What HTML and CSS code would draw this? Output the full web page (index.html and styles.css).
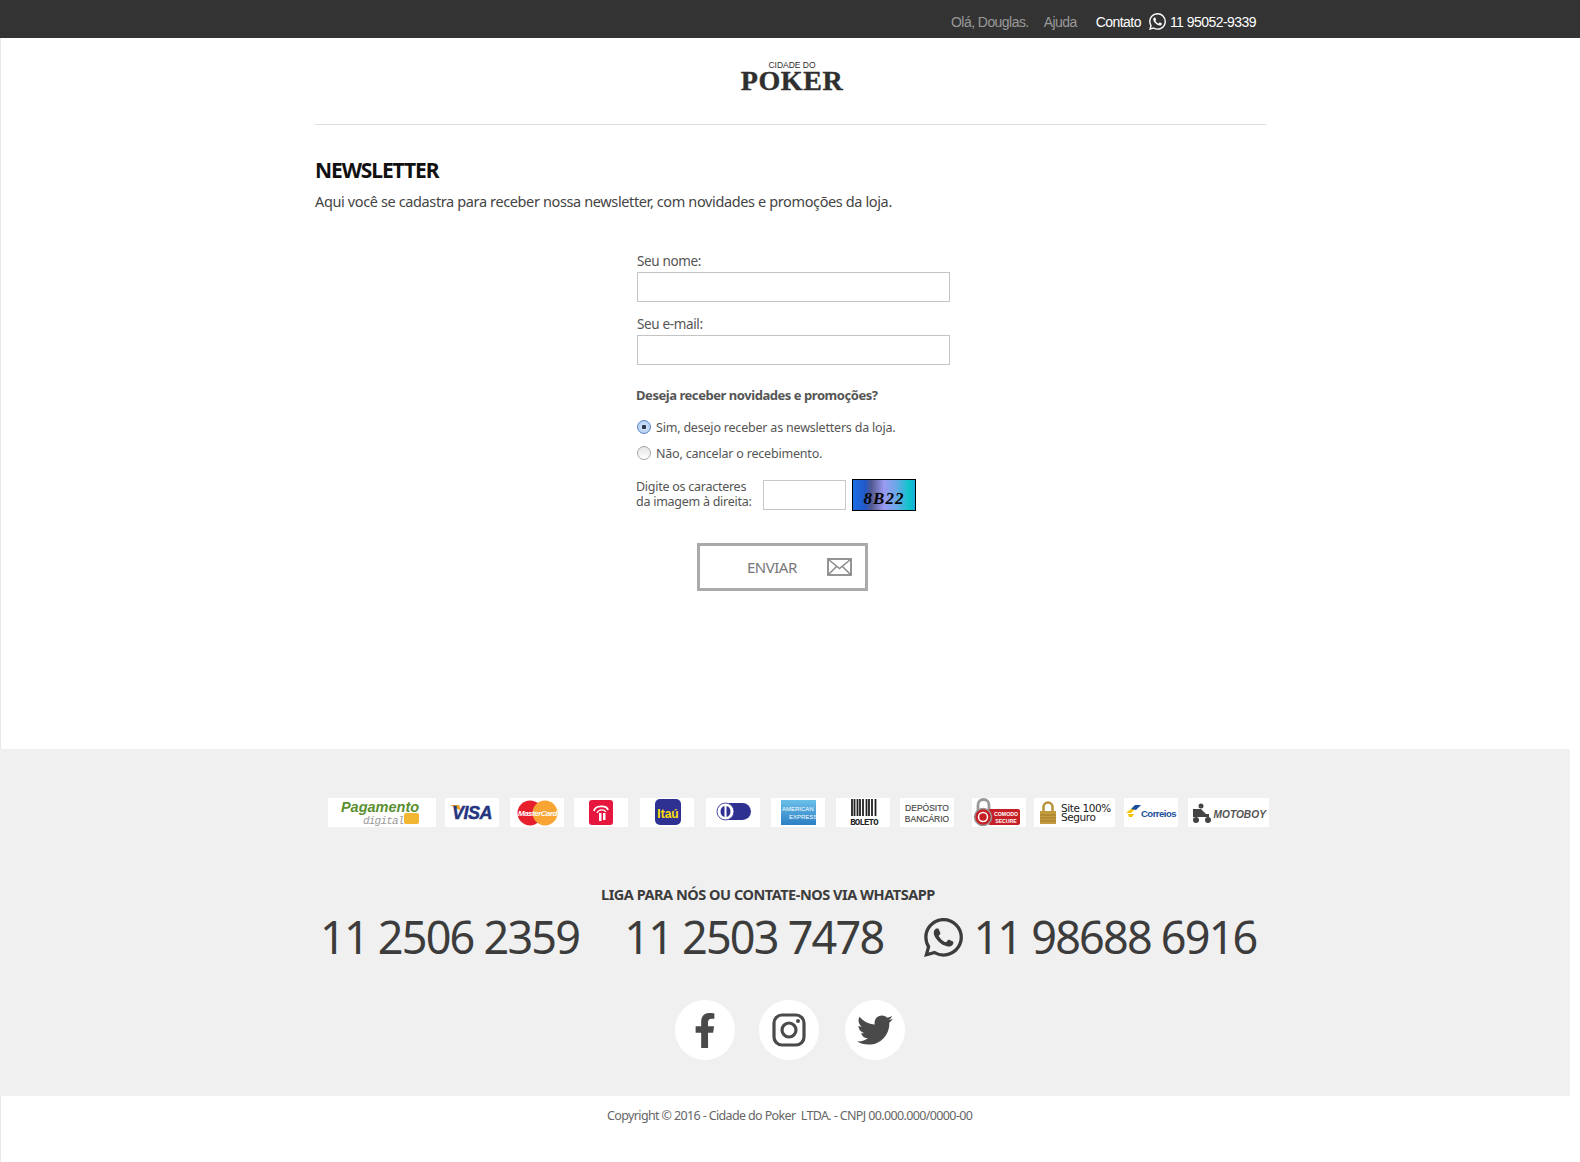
FILE: index.html
```html
<!DOCTYPE html>
<html lang="pt-BR">
<head>
<meta charset="utf-8">
<title>Newsletter - Cidade do Poker</title>
<link rel="stylesheet" href="styles.css">
</head>
<body>
<header class="topbar">
  <div class="topbar-inner">
    <a class="top-link">Olá, Douglas.</a>
    <a class="top-link help">Ajuda</a>
    <span class="top-contact">Contato</span>
    <svg class="top-wa" viewBox="0 0 24 24"><use href="#wa"/></svg>
    <span class="top-phone">11 95052-9339</span>
  </div>
</header>

<svg class="defs" width="0" height="0">
  <defs>
    <path id="wa" d="M17.472 14.382c-.297-.149-1.758-.867-2.03-.967-.273-.099-.471-.148-.67.15-.197.297-.767.966-.94 1.164-.173.199-.347.223-.644.075-.297-.15-1.255-.463-2.39-1.475-.883-.788-1.48-1.761-1.653-2.059-.173-.297-.018-.458.13-.606.134-.133.298-.347.446-.52.149-.174.198-.298.298-.497.099-.198.05-.371-.025-.52-.075-.149-.669-1.612-.916-2.207-.242-.579-.487-.5-.669-.51-.173-.008-.371-.01-.57-.01-.198 0-.52.074-.792.372-.272.297-1.04 1.016-1.04 2.479 0 1.462 1.065 2.875 1.213 3.074.149.198 2.096 3.2 5.077 4.487.709.306 1.262.489 1.694.625.712.227 1.36.195 1.871.118.571-.085 1.758-.719 2.006-1.413.248-.694.248-1.289.173-1.413-.074-.124-.272-.198-.57-.347m-5.421 7.403h-.004a9.87 9.87 0 01-5.031-1.378l-.361-.214-3.741.982.998-3.648-.235-.374a9.86 9.86 0 01-1.51-5.26c.001-5.45 4.436-9.884 9.888-9.884 2.64 0 5.122 1.03 6.988 2.898a9.825 9.825 0 012.893 6.994c-.003 5.45-4.437 9.884-9.885 9.884m8.413-18.297A11.815 11.815 0 0012.05 0C5.495 0 .16 5.335.157 11.892c0 2.096.547 4.142 1.588 5.945L.057 24l6.305-1.654a11.882 11.882 0 005.683 1.448h.005c6.554 0 11.89-5.335 11.893-11.893a11.821 11.821 0 00-3.48-8.413z"/>
  </defs>
</svg>

<div class="page">
  <main class="main">
    <div class="logo-row">
      <div class="logo">
        <span class="logo-small">CIDADE DO</span>
        <span class="logo-big">POKER</span>
      </div>
    </div>
    <h1 class="title">NEWSLETTER</h1>
    <p class="intro">Aqui você se cadastra para receber nossa newsletter, com novidades e promoções da loja.</p>

    <form class="form">
      <label class="field-label">Seu nome:</label>
      <input class="field" type="text">
      <label class="field-label second">Seu e-mail:</label>
      <input class="field" type="text">

      <p class="question">Deseja receber novidades e promoções?</p>
      <div class="radio-row first">
        <span class="radio checked"></span>
        <span class="radio-text">Sim, desejo receber as newsletters da loja.</span>
      </div>
      <div class="radio-row">
        <span class="radio"></span>
        <span class="radio-text">Não, cancelar o recebimento.</span>
      </div>

      <div class="captcha-row">
        <span class="captcha-label">Digite os caracteres<br>da imagem à direita:</span>
        <input class="captcha-input" type="text">
        <span class="captcha-img">8B22</span>
      </div>

      <div class="btn-row">
        <button class="send" type="button">
          <span>ENVIAR</span>
          <svg class="send-icon" viewBox="0 0 25 18"><rect x="1" y="1" width="23" height="16" fill="none" stroke="#8a8a8a" stroke-width="1.8"/><path d="M1.5 1.5L12.5 10.5L23.5 1.5M1.5 16.5L9.5 8.5M23.5 16.5L15.5 8.5" fill="none" stroke="#8a8a8a" stroke-width="1.5"/></svg>
        </button>
      </div>
    </form>
  </main>

  <footer class="footer">
    <div class="tiles">
      <div class="tile w108">
        <svg viewBox="0 0 108 29"><text x="52" y="14" class="pd1">Pagamento</text><text x="35" y="26" class="pd2">digital</text><rect x="76" y="15" width="15" height="11" rx="2" fill="#f2b632"/></svg>
      </div>
      <div class="tile ml9">
        <svg viewBox="0 0 54 29"><path d="M5 7h9l2.500 6z" fill="#f0a02c"/><text x="27" y="21" class="visa">VISA</text></svg>
      </div>
      <div class="tile ml11">
        <svg viewBox="0 0 54 29"><circle cx="20" cy="15" r="12.500" fill="#e8202e"/><circle cx="35" cy="15" r="12.500" fill="#f9a533"/><text x="27.500" y="18" class="mc">MasterCard</text></svg>
      </div>
      <div class="tile ml10">
        <svg viewBox="0 0 54 29"><rect x="15" y="2" width="24" height="25" rx="3" fill="#e5173f"/><path d="M20 13c1-6 13-6 14-1" fill="none" stroke="#fff" stroke-width="1.800"/><path d="M23 15c2-4 7-4 9-1" fill="none" stroke="#fff" stroke-width="1.200"/><path d="M25 15h2.500v8H25zM29 15h2.500v7H29z" fill="#fff"/></svg>
      </div>
      <div class="tile ml12">
        <svg viewBox="0 0 54 29"><rect x="15" y="1" width="26" height="26" rx="5" fill="#2e3192"/><text x="28" y="20" class="itau">Itaú</text></svg>
      </div>
      <div class="tile ml12">
        <svg viewBox="0 0 54 29"><rect x="11" y="5" width="34" height="17" rx="8.500" fill="#2e3192"/><circle cx="19.500" cy="13.500" r="8.500" fill="#fff" stroke="#2e3192" stroke-width=".8"/><path d="M18.500 8v11a5.800 5.800 0 0 1 0-11zM20.500 8a5.800 5.800 0 0 1 0 11z" fill="#2e3192"/></svg>
      </div>
      <div class="tile ml11">
        <svg viewBox="0 0 54 29"><defs><linearGradient id="amex" x1="0" y1="0" x2="0" y2="1"><stop offset="0" stop-color="#6bc0ea"/><stop offset="1" stop-color="#2b7fc3"/></linearGradient></defs><rect x="10" y="2" width="35" height="25" fill="url(#amex)"/><text x="11" y="13" class="amex">AMERICAN</text><text x="18" y="21" class="amex">EXPRESS</text></svg>
      </div>
      <div class="tile ml11">
        <svg viewBox="0 0 54 29"><path d="M16 1v17M18.500 1v17M21.500 1v17M24 1v17M27 1v17M30.500 1v17M33 1v17M36 1v17M39.500 1v17" stroke="#222" stroke-width="1.800"/><text x="28" y="27" class="boleto">BOLETO</text></svg>
      </div>
      <div class="tile ml10">
        <svg viewBox="0 0 54 29"><text x="27" y="13" class="dep">DEPÓSITO</text><text x="27" y="24" class="dep">BANCÁRIO</text></svg>
      </div>
      <div class="tile ml18">
        <svg viewBox="0 0 54 29"><path d="M6 14V7a5.500 5.500 0 0 1 11 0v7" fill="none" stroke="#999" stroke-width="2.800"/><rect x="16" y="11" width="32" height="16" rx="2" fill="#c61f26"/><circle cx="11" cy="19" r="8.500" fill="#c61f26" stroke="#999" stroke-width="1.500"/><circle cx="11" cy="19" r="4.500" fill="none" stroke="#fff" stroke-width="1.500"/><text x="34" y="18" class="com">COMODO</text><text x="34" y="25" class="com">SECURE</text></svg>
      </div>
      <div class="tile w81 ml8">
        <svg viewBox="0 0 81 29"><path d="M9.500 14V9a4.500 4.500 0 0 1 9 0v5" fill="none" stroke="#b8923c" stroke-width="2.500"/><rect x="6" y="13" width="16" height="13" fill="#c49a3f"/><path d="M6 17h16M6 20h16M6 23h16" stroke="#a27a2b" stroke-width="1"/><text x="27" y="14" class="site">Site 100%</text><text x="27" y="23" class="site">Seguro</text></svg>
      </div>
      <div class="tile ml9">
        <svg viewBox="0 0 54 29"><path d="M2 15l5-4h4l-4 4z" fill="#f4c300"/><path d="M7 11l4-4h6l-5 5z" fill="#1a4f9c"/><path d="M4 16h6l-2 3H5z" fill="#f4c300"/><text x="17" y="19" class="cor">Correios</text></svg>
      </div>
      <div class="tile w81 ml10">
        <svg viewBox="0 0 81 29"><circle cx="13" cy="8" r="2.500" fill="#444"/><path d="M5 11h8v8H5zM13 11l5 5h3v3h-8z" fill="#444"/><circle cx="8" cy="22" r="3" fill="#444"/><circle cx="20" cy="22" r="3" fill="#444"/><text x="25.500" y="20" class="moto">MOTOBOY</text></svg>
      </div>
    </div>

    <h2 class="liga">LIGA PARA NÓS OU CONTATE-NOS VIA WHATSAPP</h2>
    <div class="phones">
      <span class="phone">11 2506 2359</span>
      <span class="phone p2">11 2503 7478</span>
      <svg class="phone-wa" viewBox="0 0 24 24"><use href="#wa"/></svg>
      <span class="phone p3">11 98688 6916</span>
    </div>

    <div class="social">
      <a class="soc"><svg class="i-fb" viewBox="0 0 320 512"><path d="M279.14 288l14.22-92.66h-88.91v-60.13c0-25.35 12.42-50.06 52.24-50.06h40.42V6.26S260.43 0 225.36 0c-73.22 0-121.08 44.38-121.08 124.72v70.62H22.89V288h81.39v224h100.17V288z"/></svg></a>
      <a class="soc"><svg class="i-ig" viewBox="0 0 34 34"><rect x="2" y="2" width="30" height="30" rx="8" fill="none" stroke-width="3.200"/><circle cx="17" cy="17" r="7" fill="none" stroke-width="3.200"/><circle cx="26" cy="8" r="2" class="dot"/></svg></a>
      <a class="soc"><svg class="i-tw" viewBox="0 0 512 512"><path d="M459.37 151.716c.325 4.548.325 9.097.325 13.645 0 138.72-105.583 298.558-298.558 298.558-59.452 0-114.68-17.219-161.137-47.106 8.447.974 16.568 1.299 25.34 1.299 49.055 0 94.213-16.568 130.274-44.832-46.132-.975-84.792-31.188-98.112-72.772 6.498.974 12.995 1.624 19.818 1.624 9.421 0 18.843-1.3 27.614-3.573-48.081-9.747-84.143-51.98-84.143-102.985v-1.299c13.969 7.797 30.214 12.67 47.431 13.319-28.264-18.843-46.781-51.005-46.781-87.391 0-19.492 5.197-37.36 14.294-52.954 51.655 63.675 129.3 105.258 216.365 109.807-1.624-7.797-2.599-15.918-2.599-24.04 0-57.828 46.782-104.934 104.934-104.934 30.213 0 57.502 12.67 76.67 33.137 23.715-4.548 46.456-13.32 66.599-25.34-7.798 24.366-24.366 44.833-46.132 57.827 21.117-2.273 41.584-8.122 60.426-16.243-14.292 20.791-32.161 39.308-52.628 54.253z"/></svg></a>
    </div>
  </footer>
  <p class="copy">Copyright © 2016 - Cidade do Poker  LTDA. - CNPJ 00.000.000/0000-00</p>
</div>
</body>
</html>
```

FILE: styles.css
```css
* { box-sizing: border-box; }
html, body { margin: 0; padding: 0; background: #fff; }
body { font-family: "Noto Sans", "Open Sans", sans-serif; color: #3c3c3c; height: 1162px; overflow: hidden; }
.defs { display: block; height: 0; }

.topbar { height: 38px; background: #333; }
.topbar-inner { display: flex; align-items: center; height: 38px; padding: 5px 0 0 951px; font-family: "Liberation Sans", Arial, sans-serif; font-size: 14px; letter-spacing: -.55px; }
.top-link { color: #999; }
.help { margin-left: 15px; }
.top-contact { color: #fff; margin-left: 19px; }
.top-wa { width: 17px; height: 17px; fill: #fff; margin: -1px 0 0 8px; }
.top-phone { color: #fff; margin-left: 4px; }

.page { border-left: 1px solid #e8e8e8; height: 1124px; }
.main { height: 711px; margin-left: 314px; width: 951px; }
.logo-row { height: 87px; border-bottom: 1px solid #ddd; display: flex; justify-content: center; }
.logo { display: flex; flex-direction: column; align-items: center; padding-top: 23px; color: #2f2f2f; margin-left: 3px; }
.logo-small { font-family: "Liberation Sans", sans-serif; font-size: 8.500px; line-height: 9px; }
.logo-big { font-family: "Liberation Serif", serif; font-weight: bold; font-size: 28px; line-height: 22px; letter-spacing: .6px; -webkit-text-stroke: .4px #2f2f2f; }

.title { margin: 32px 0 0; font-size: 21px; line-height: 26px; font-weight: 700; color: #111; letter-spacing: -1.1px; }
.intro { margin: 8px 0 0; font-size: 14.500px; line-height: 20px; color: #444; letter-spacing: -.375px; }

.form { margin: 41px 0 0 322px; width: 330px; }
.field-label { display: block; font-size: 13.500px; line-height: 18px; color: #555; letter-spacing: -.35px; }
.field-label.second { margin-top: 13px; }
.field { display: block; width: 313px; height: 30px; border: 1px solid #c4c4c4; background: #fff; margin-top: 2px; padding: 0; }
.question { margin: 21px 0 0 -1px; font-size: 13px; line-height: 18px; font-weight: 700; color: #555; letter-spacing: -.45px; }
.radio-row { display: flex; align-items: center; height: 18px; margin-top: 8px; }
.radio-row.first { margin-top: 14px; }
.radio { width: 14px; height: 14px; border-radius: 50%; border: 1px solid #a5a5a5; background: linear-gradient(#e4e4e4, #fff); position: relative; }
.radio.checked { border-color: #5a86c5; background: radial-gradient(circle, #27354d 0 2px, #cfe0f7 2.500px, #9fc0ec 100%); }
.radio-text { margin-left: 5px; font-size: 12.500px; color: #555; letter-spacing: -.2px; }
.captcha-row { display: flex; align-items: center; margin: 17px 0 0 -1px; height: 32px; }
.captcha-label { width: 127px; margin-top: -2px; font-size: 12.500px; line-height: 15px; color: #555; letter-spacing: -.26px; }
.captcha-input { width: 83px; height: 30px; border: 1px solid #c8c8c8; padding: 0; background: #fff; }
.captcha-img { width: 64px; height: 32px; margin-left: 6px; border: 1px solid #000; background: linear-gradient(90deg, #1a6ee6 0%, #2358c8 20%, #555a90 30%, #9a9af2 50%, #6aa8e8 70%, #10c4cc 90%, #15b0d8 100%); font-family: "Liberation Serif", serif; font-weight: bold; font-style: italic; font-size: 17px; color: #050505; line-height: 38px; text-align: center; letter-spacing: 1px; }
.btn-row { margin: 32px 0 0 60px; }
.send { display: flex; align-items: center; width: 171px; height: 48px; border: 3px solid #aaa; background: #fff; padding: 0 0 0 47px; font-family: inherit; font-size: 15px; color: #777; letter-spacing: -.5px; }
.send-icon { width: 25px; height: 18px; margin-left: 30px; }

.footer { margin-left: -1px; width: 1570px; height: 347px; background: #f0f0f0; padding-top: 49px; }
.tiles { display: flex; padding-left: 328px; }
.tile { width: 54px; height: 29px; background: #fff; flex: none; }
.tile svg { display: block; width: 100%; height: 100%; }
.tile.w108 { width: 108px; }
.tile.w81 { width: 81px; }
.ml8 { margin-left: 8px; }
.ml9 { margin-left: 9px; }
.ml10 { margin-left: 10px; }
.ml11 { margin-left: 11px; }
.ml12 { margin-left: 12px; }
.ml18 { margin-left: 18px; }

.pd1 { font: italic bold 14.500px "Liberation Sans", sans-serif; fill: #5a9030; text-anchor: middle; }
.pd2 { font: italic 11px "Liberation Mono", monospace; fill: #9a9a9a; letter-spacing: -.8px; }
.visa { font: italic bold 18px "Liberation Sans", sans-serif; fill: #24357f; stroke: #24357f; stroke-width: .4px; text-anchor: middle; letter-spacing: -.5px; }
.mc { font: italic bold 8px "Liberation Sans", sans-serif; fill: #fff; text-anchor: middle; letter-spacing: -.5px; }
.itau { font: bold 12px "Liberation Sans", sans-serif; fill: #ffe100; text-anchor: middle; }
.amex { font: 6px "Liberation Sans", sans-serif; fill: #fff; }
.boleto { font: bold 9px "Liberation Mono", monospace; fill: #222; text-anchor: middle; letter-spacing: -.8px; }
.dep { font: 8.500px "Liberation Sans", sans-serif; fill: #444; stroke: #444; stroke-width: .15px; text-anchor: middle; }
.com { font: bold 5.200px "Liberation Sans", sans-serif; fill: #fff; text-anchor: middle; }
.site { font: 10.500px "DejaVu Sans", sans-serif; fill: #222; letter-spacing: -.4px; }
.cor { font: bold 9.500px "Liberation Sans", sans-serif; fill: #1a4f9c; letter-spacing: -.5px; }
.moto { font: italic bold 10.200px "Liberation Sans", sans-serif; fill: #555; }

.liga { margin: 57px 0 0; padding-left: 601px; font-size: 14.500px; line-height: 20px; font-weight: 700; color: #3c3c3c; letter-spacing: -.47px; }
.phones { display: flex; align-items: center; margin-top: 4px; padding-left: 320px; height: 58px; }
.phone { font-size: 45px; line-height: 58px; color: #3c3c3c; letter-spacing: -1.8px; white-space: nowrap; }
.p2 { margin-left: 45px; }
.phone-wa { width: 39px; height: 39px; fill: #3c3c3c; margin-left: 41px; }
.p3 { margin-left: 10px; }

.social { display: flex; padding-left: 675px; margin-top: 34px; gap: 24px; }
.soc { width: 60px; height: 60px; border-radius: 50%; background: #fff; display: flex; align-items: center; justify-content: center; }
.soc svg { fill: #4a4a4a; }
.soc:nth-child(3) { margin-left: 2px; }
.i-fb { width: 22px; height: 35px; }
.i-ig { width: 34px; height: 34px; stroke: #4a4a4a; fill: none; }
.i-ig .dot { fill: #4a4a4a; stroke: none; }
.i-tw { width: 36px; height: 36px; }

.copy { margin: 10px 0 0; padding-left: 606px; font-size: 12.500px; line-height: 20px; color: #666; letter-spacing: -.63px; white-space: pre; }
```
